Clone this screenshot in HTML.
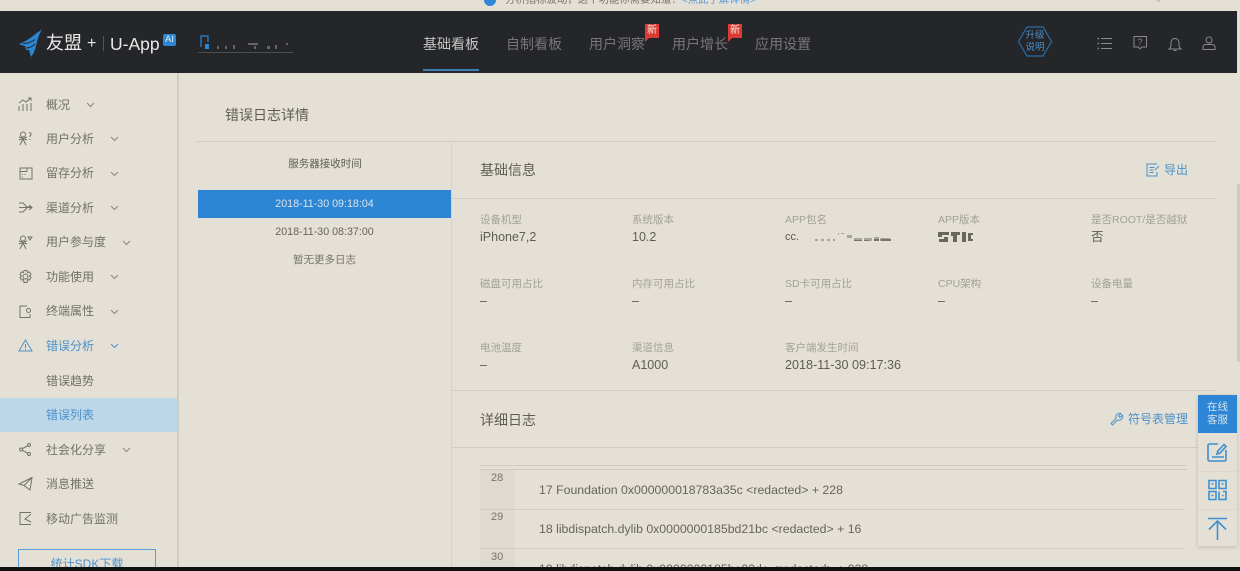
<!DOCTYPE html>
<html lang="zh"><head><meta charset="utf-8"><title>错误日志详情</title>
<style>
html{margin:0;padding:0;width:1240px;height:571px;overflow:hidden;background:#e4e0d5}
body{margin:0;padding:0;width:1240px;height:571px;overflow:hidden;background:#e4e0d5;position:relative;font-family:"Liberation Sans","Noto Sans CJK SC",sans-serif;color:#66635d}
.a{position:absolute;white-space:nowrap}
.l{height:1px;position:absolute;background:#d0ccc2}
.nav{position:absolute;top:34px;font-size:14px;line-height:20px;color:#77777a;white-space:nowrap}
.new{position:absolute;top:24px;width:14px;height:14px;background:#dc3b34;color:#f3e9df;font-size:10px;line-height:14px;text-align:center}
.new:after{content:"";position:absolute;left:0;top:14px;border-top:4px solid #dc3b34;border-right:4px solid transparent}
.m{position:absolute;left:46px;font-size:12px;line-height:18px;color:#72706a;white-space:nowrap}
.c{position:absolute;width:9px;height:6px}
.i{position:absolute;left:18px;width:15px;height:15px;fill:none;stroke:#74726c;stroke-width:1}
.k{position:absolute;font-size:10.5px;line-height:14px;color:#a3a097;white-space:nowrap}
.v{position:absolute;font-size:12.5px;line-height:16px;color:#5f5c57;white-space:nowrap}
.code{position:absolute;left:539px;font-size:12.3px;line-height:16px;color:#66635d;white-space:nowrap}
.num{position:absolute;left:491px;font-size:11px;line-height:14px;color:#77746d}
</style></head><body>

<div class="a" style="left:484px;top:-6px;width:12px;height:12px;border-radius:50%;background:#2f87d6"></div>
<div class="a" style="left:505px;top:-6px;font-size:10.400px;line-height:14px;color:#77746d">分析指标波动，这个功能你需要知道！<span style="color:#5b9bd5">&lt;点此了解详情&gt;</span></div>
<div class="a" style="left:1156px;top:-4px;font-size:8px;line-height:10px;color:#aaa79e">×</div>

<div class="a" style="left:0;top:11px;width:1237px;height:62px;background:#24262a"></div>
<svg class="a" style="left:18px;top:28px" width="26" height="30" viewBox="0 0 26 30"><path d="M24 1C21 4 18 5 15 8 10 12 6 14 1 16c2 1 4 1.500 6 2l1 4 3 0 2 7c3-4 4-7 5-11 1-6 3-11 6-17z" fill="#2b87d1"/><path d="M5 15.500c4 0 8-1 12-4M8 20c4 0 7-2 9-4" stroke="#24262a" stroke-width=".9" fill="none"/></svg>
<div class="a" style="left:46px;top:32px;font-size:18px;line-height:22px;color:#e8e8e6">友盟</div>
<div class="a" style="left:87px;top:33px;font-size:16px;line-height:22px;color:#e8e8e6">+</div>
<div class="a" style="left:103px;top:36px;width:1px;height:15px;background:#55565a"></div>
<div class="a" style="left:110px;top:33px;font-size:17.500px;line-height:22px;color:#e8e8e6">U-App</div>
<div class="a" style="left:163px;top:34px;width:13px;height:12px;border-radius:2px;background:#2b87d1;color:#e8eef2;font-size:9.500px;line-height:12px;text-align:center">AI</div>
<svg class="a" style="left:198px;top:34px" width="96" height="20" viewBox="0 0 96 20"><path d="M3 13V2h7v6" fill="none" stroke="#2b87d1" stroke-width="1.200"/><rect x="7" y="10" width="4" height="5" fill="#2b87d1"/><path d="M19 12h2v3h-2zM27 12h2v3h-2zM35 11h2v4h-2zM50 9h10v2H50zM56 12h2v3h-2zM69 12h3v3h-3zM77 11h2v4h-2zM88 9h2v2h-2z" fill="#66666a"/><rect x="0" y="18" width="95" height="1" fill="#4c4d50"/></svg>

<div class="nav" style="left:423px;color:#c6c6c4">基础看板</div>
<div class="a" style="left:423px;top:69px;width:56px;height:2px;background:#3c7fb3"></div>
<div class="nav" style="left:506px">自制看板</div>
<div class="nav" style="left:589px">用户洞察</div><div class="new" style="left:645px">新</div>
<div class="nav" style="left:672px">用户增长</div><div class="new" style="left:728px">新</div>
<div class="nav" style="left:755px">应用设置</div>

<svg class="a" style="left:1017px;top:26px" width="36" height="31" viewBox="0 0 36 31"><path d="M10 1h16l8.500 14.500L26 30H10L1.500 15.500z" fill="none" stroke="#2b6ea6" stroke-width="1.200"/></svg>
<div class="a" style="left:1025px;top:30px;width:20px;font-size:9.500px;line-height:12px;color:#4d8fc4;text-align:center;white-space:normal">升级说明</div>
<svg class="a" style="left:1097px;top:36px" width="16" height="15" viewBox="0 0 16 15" fill="none" stroke="#8a8a8a"><path d="M4 2.500h11M4 7.500h11M4 12.500h11"/><path d="M.5 2.500h1.500M.5 7.500h1.500M.5 12.500h1.500" stroke-width="1.500"/></svg>
<svg class="a" style="left:1133px;top:36px" width="15" height="15" viewBox="0 0 15 15" fill="none" stroke="#8a8a8a"><path d="M1 .5h12.500v10.500H9L7 13 5.500 11H1z"/><text x="4.500" y="9" font-size="9" fill="#8a8a8a" stroke="none" font-family="Liberation Sans">?</text></svg>
<svg class="a" style="left:1168px;top:37px" width="14" height="15" viewBox="0 0 14 15" fill="none" stroke="#8a8a8a"><path d="M1 12h12c-2-1.500-2-3-2-6C11 3.500 9.500 1.500 7 1.500S3 3.500 3 6c0 3 0 4.500-2 6zM5.500 13.500h3"/></svg>
<svg class="a" style="left:1202px;top:36px" width="14" height="14" viewBox="0 0 14 14" fill="none" stroke="#8a8a8a"><circle cx="7" cy="4" r="3"/><path d="M1 13.500v-2c0-2 1-3 3-3h6c2 0 3 1 3 3v2z"/></svg>

<div class="a" style="left:177px;top:73px;width:2px;height:498px;background:#d0ccc2"></div>
<div class="a" style="left:1237px;top:184px;width:3px;height:178px;background:#cfcbc0"></div>

<svg class="i" style="top:97px" viewBox="0 0 15 15"><path d="M1 14V9M5 14V7M9 14V7M13 14V6M1 6l4-3 3 2 5-4M10 1h3v3"/></svg>
<div class="m" style="top:96px">概况</div>
<svg class="c" style="left:86px;top:102px" viewBox="0 0 9 6" fill="none" stroke="#8a877f"><path d="M1 1l3.500 3.500L8 1"/></svg>
<svg class="i" style="top:131px" viewBox="0 0 15 15"><circle cx="5" cy="3.500" r="2.500"/><path d="M1 6l8 3M9 6L1 9M5 8l-3 6M5 8l3 6"/><path d="M11 2c2-1 3 1 1 3v1M12 8v1"/></svg>
<div class="m" style="top:130px">用户分析</div>
<svg class="c" style="left:110px;top:136px" viewBox="0 0 9 6" fill="none" stroke="#8a877f"><path d="M1 1l3.500 3.500L8 1"/></svg>
<svg class="i" style="top:166px" viewBox="0 0 15 15"><path d="M2 2h12v11H2zM2 5.500h7M9 2v3.500"/><path d="M4.500 8v1M4.500 10.500v1M7 8v1"/></svg>
<div class="m" style="top:164px">留存分析</div>
<svg class="c" style="left:110px;top:171px" viewBox="0 0 9 6" fill="none" stroke="#8a877f"><path d="M1 1l3.500 3.500L8 1"/></svg>
<svg class="i" style="top:200px" viewBox="0 0 15 15"><path d="M1 3h4l4 4h5M1 7.500h13M1 12h4l4-4M11 5l3 2.500L11 10"/></svg>
<div class="m" style="top:199px">渠道分析</div>
<svg class="c" style="left:110px;top:205px" viewBox="0 0 9 6" fill="none" stroke="#8a877f"><path d="M1 1l3.500 3.500L8 1"/></svg>
<svg class="i" style="top:235px" viewBox="0 0 15 15"><circle cx="5" cy="3.500" r="2.500"/><path d="M1 6l8 3M9 6L1 9M5 8l-3 6M5 8l3 6"/><path d="M10 2h4l-2 3z"/></svg>
<div class="m" style="top:233px">用户参与度</div>
<svg class="c" style="left:122px;top:240px" viewBox="0 0 9 6" fill="none" stroke="#8a877f"><path d="M1 1l3.500 3.500L8 1"/></svg>
<svg class="i" style="top:269px" viewBox="0 0 15 15"><circle cx="7.500" cy="7.500" r="2.500"/><path d="M6 1.500h3l.5 2 2-.5 1.500 2.500-1.500 1.500 1.500 1.500L11.500 11l-2-.5-.5 3H6l-.5-3-2 .5L2 8.500 3.500 7 2 5.500 3.500 3l2 .5z"/></svg>
<div class="m" style="top:268px">功能使用</div>
<svg class="c" style="left:110px;top:274px" viewBox="0 0 9 6" fill="none" stroke="#8a877f"><path d="M1 1l3.500 3.500L8 1"/></svg>
<svg class="i" style="top:304px" viewBox="0 0 15 15"><path d="M12 10v3.500H2V2h7"/><circle cx="10.500" cy="6.500" r="2"/></svg>
<div class="m" style="top:302px">终端属性</div>
<svg class="c" style="left:110px;top:309px" viewBox="0 0 9 6" fill="none" stroke="#8a877f"><path d="M1 1l3.500 3.500L8 1"/></svg>
<svg class="i" style="top:338px;stroke:#4c91cc" viewBox="0 0 15 15"><path d="M7.500 2 14 13H1zM7.500 6v4M7.500 11v1"/></svg>
<div class="m" style="top:337px;color:#4c91cc">错误分析</div>
<svg class="c" style="left:110px;top:343px" viewBox="0 0 9 6" fill="none" stroke="#4c91cc"><path d="M1 1l3.500 3.500L8 1"/></svg>
<div class="m" style="top:372px">错误趋势</div>
<div class="a" style="left:0;top:398px;width:177px;height:34px;background:#bcd7e8"></div>
<div class="m" style="top:406px;color:#4c91cc">错误列表</div>
<svg class="i" style="top:442px" viewBox="0 0 15 15"><circle cx="3" cy="7.500" r="1.500"/><circle cx="11" cy="3" r="1.500"/><circle cx="11" cy="12" r="1.500"/><path d="M4.500 6.500 9.700 3.800M4.500 8.500l5.200 2.700"/></svg>
<div class="m" style="top:441px">社会化分享</div>
<svg class="c" style="left:122px;top:447px" viewBox="0 0 9 6" fill="none" stroke="#8a877f"><path d="M1 1l3.500 3.500L8 1"/></svg>
<svg class="i" style="top:476px" viewBox="0 0 15 15"><path d="M14 1.500 1 8l5 1.500 6 4.500zM6 9.500 14 1.500"/></svg>
<div class="m" style="top:475px">消息推送</div>
<svg class="i" style="top:511px" viewBox="0 0 15 15"><path d="M13 13.500H2V1.500h11M13 3 7 8l6 3"/></svg>
<div class="m" style="top:510px">移动广告监测</div>
<div class="a" style="left:18px;top:549px;width:136px;height:30px;border:1px solid #5a9fd6;font-size:12px;line-height:28px;text-align:center;color:#4c91cc">统计SDK下载</div>

<div class="a" style="left:225px;top:105px;font-size:14px;line-height:20px;color:#5f5c57">错误日志详情</div>
<div class="l" style="left:197px;top:141px;width:1020px"></div>
<div class="a" style="left:451px;top:141px;width:1px;height:430px;background:#d6d2c8"></div>
<div class="a" style="left:198px;top:155px;width:254px;text-align:center;font-size:10.500px;line-height:18px;color:#5f5c57">服务器接收时间</div>
<div class="a" style="left:198px;top:190px;width:253px;height:28px;background:#2d85d5;color:#d9e3e8;text-align:center;font-size:10.700px;line-height:28px">2018-11-30 09:18:04</div>
<div class="a" style="left:198px;top:223px;width:253px;text-align:center;font-size:10.700px;line-height:18px;color:#66635d">2018-11-30 08:37:00</div>
<div class="a" style="left:198px;top:251px;width:253px;text-align:center;font-size:10.500px;line-height:18px;color:#77746d">暂无更多日志</div>

<div class="a" style="left:480px;top:160px;font-size:14px;line-height:20px;color:#5f5c57">基础信息</div>
<svg class="a" style="left:1146px;top:163px" width="14" height="14" viewBox="0 0 14 14" fill="none" stroke="#4c91cc"><path d="M11 1H1v12h10V9M3.500 4.500h5M3.500 7h4M3.500 9.500h4M13 3 9 7"/></svg>
<div class="a" style="left:1164px;top:162px;font-size:12px;line-height:17px;color:#4c91cc">导出</div>
<div class="l" style="left:452px;top:198px;width:765px"></div>

<div class="k" style="left:480px;top:213px">设备机型</div><div class="v" style="left:480px;top:229px">iPhone7,2</div>
<div class="k" style="left:632px;top:213px">系统版本</div><div class="v" style="left:632px;top:229px">10.2</div>
<div class="k" style="left:785px;top:213px">APP包名</div><div class="v" style="left:785px;top:229px;font-size:11px">cc.</div>
<svg class="a" style="left:812px;top:230px" width="84" height="14" viewBox="0 0 84 14"><path d="M3 9h3v2H3zM9 9h3v2H9zM15 9h3v2h-3zM21 9h2v2h-2zM26 3h1v2h-1zM29 3h3v1h-3zM35 5h5v3h-5zM42 8h8v3h-8zM52 8h8v3h-8zM62 7h5v4h-5zM68 8h10v3H68z" fill="#a8a59c"/><path d="M42 10h8v1h-8zM52 10h5v1h-5zM62 9h5v2h-5zM69 9h10v2H69z" fill="#77746d"/></svg>
<div class="k" style="left:938px;top:213px">APP版本</div>
<svg class="a" style="left:938px;top:231px" width="36" height="12" viewBox="0 0 36 12"><path d="M0 1h11v3H4v2h6v5H1V8h5V6H0zM13 1h9v3h-3v7h-4V5h-2zM24 1h4v10h-4zM30 2h5v2h-2v4h2v2h-5z" fill="#6a675f"/></svg>
<div class="k" style="left:1091px;top:213px">是否ROOT/是否越狱</div><div class="v" style="left:1091px;top:229px">否</div>

<div class="k" style="left:480px;top:277px">磁盘可用占比</div><div class="v" style="left:480px;top:293px">–</div>
<div class="k" style="left:632px;top:277px">内存可用占比</div><div class="v" style="left:632px;top:293px">–</div>
<div class="k" style="left:785px;top:277px">SD卡可用占比</div><div class="v" style="left:785px;top:293px">–</div>
<div class="k" style="left:938px;top:277px">CPU架构</div><div class="v" style="left:938px;top:293px">–</div>
<div class="k" style="left:1091px;top:277px">设备电量</div><div class="v" style="left:1091px;top:293px">–</div>

<div class="k" style="left:480px;top:341px">电池温度</div><div class="v" style="left:480px;top:357px">–</div>
<div class="k" style="left:632px;top:341px">渠道信息</div><div class="v" style="left:632px;top:357px">A1000</div>
<div class="k" style="left:785px;top:341px">客户端发生时间</div><div class="v" style="left:785px;top:357px;font-size:12.600px">2018-11-30 09:17:36</div>

<div class="l" style="left:452px;top:390px;width:765px"></div>
<div class="a" style="left:480px;top:410px;font-size:14px;line-height:20px;color:#5f5c57">详细日志</div>
<svg class="a" style="left:1110px;top:412px" width="14" height="14" viewBox="0 0 14 14" fill="none" stroke="#4c91cc"><path d="M1 11.500 6 6.500C5 3 8 .5 11 1.500L8.500 4l1.500 1.500L12.500 3c1 3-1.500 6-5 5l-5 5z"/></svg>
<div class="a" style="left:1128px;top:411px;font-size:12px;line-height:17px;color:#4c91cc">符号表管理</div>
<div class="l" style="left:452px;top:447px;width:747px"></div>

<div class="l" style="left:480px;top:465px;width:707px"></div>
<div class="l" style="left:480px;top:469px;width:707px"></div>
<div class="a" style="left:480px;top:470px;width:34px;height:101px;background:#dedad0"></div>
<div class="l" style="left:480px;top:509px;width:705px"></div>
<div class="l" style="left:480px;top:548px;width:705px"></div>
<div class="num" style="top:471px">28</div>
<div class="code" style="top:482px">17 Foundation 0x000000018783a35c &lt;redacted&gt; + 228</div>
<div class="num" style="top:510px">29</div>
<div class="code" style="top:521px">18 libdispatch.dylib 0x0000000185bd21bc &lt;redacted&gt; + 16</div>
<div class="num" style="top:550px">30</div>
<div class="code" style="top:561px">19 libdispatch.dylib 0x0000000185be02dc &lt;redacted&gt; + 928</div>

<div class="a" style="left:1198px;top:395px;width:39px;height:151px;background:#e4e0d5;box-shadow:0 1px 4px rgba(90,85,75,.25)"></div>
<div class="a" style="left:1198px;top:395px;width:39px;height:38px;background:#2d85d5;color:#d6e2ea;font-size:10.500px;line-height:13px;text-align:center;padding-top:6px;box-sizing:border-box;white-space:normal">在线<br>客服</div>
<div class="a" style="left:1198px;top:471px;width:39px;height:1px;background:#dcd8cd"></div>
<div class="a" style="left:1198px;top:509px;width:39px;height:1px;background:#dcd8cd"></div>
<svg class="a" style="left:1207px;top:442px" width="21" height="21" viewBox="0 0 21 21" fill="none" stroke="#3f8fd2" stroke-width="1.600"><path d="M11 2H2.500a1.500 1.500 0 0 0-1.500 1.500v14a1.500 1.500 0 0 0 1.500 1.500h15a1.500 1.500 0 0 0 1.500-1.500V8"/><path d="M10 12l.8-3L17 2.500l2 2L13 11zM5 15h12"/></svg>
<svg class="a" style="left:1207px;top:479px" width="21" height="22" viewBox="0 0 21 22" fill="none" stroke="#3f8fd2" stroke-width="1.600"><path d="M2 1.500h7v8H2zM12 1.500h7v8h-7zM2 12.500h7v8H2zM4.500 5h2M14.500 5h2M4.500 16.500h2M12 12.500v8h7v-8h-3M15 16.500h1.500"/></svg>
<svg class="a" style="left:1207px;top:517px" width="21" height="24" viewBox="0 0 21 24" fill="none" stroke="#3f8fd2" stroke-width="1.600"><path d="M1 1.500h19M10.500 23V4M2 12.500 10.500 4 19 12.500"/></svg>

<div class="a" style="left:0;top:567px;width:1240px;height:4px;background:#111"></div>
</body></html>
